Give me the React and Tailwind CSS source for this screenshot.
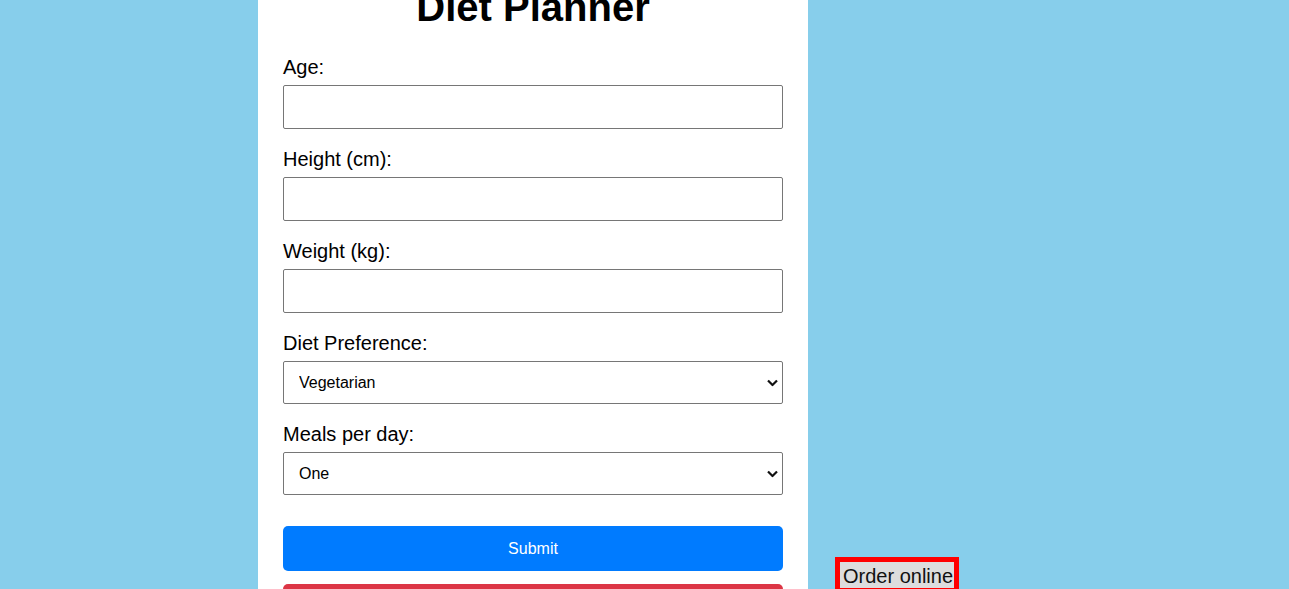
import React, { useState } from "react";

const font = { fontFamily: '"Liberation Sans", Arial, sans-serif' };

function Field({ label, children }) {
	return (
		<div>
			<label className="mb-[7px] block h-[23px] pt-[1px] text-[20px] leading-[23px] text-black">
				{label}
			</label>
			{children}
		</div>
	);
}

function Chevron() {
	return (
		<svg
			className="pointer-events-none absolute right-[5px] top-1/2 -translate-y-1/2"
			width="11"
			height="7"
			viewBox="0 0 11 7"
		>
			<path d="M1 1l4.5 4.5L10 1" fill="none" stroke="#111" strokeWidth="2.2" />
		</svg>
	);
}

function Select({ options, value, onChange }) {
	return (
		<div className="relative mb-[18px] h-[43px]">
			<select
				value={value}
				onChange={(e) => onChange(e.target.value)}
				className="h-full w-full appearance-none rounded-[2px] border border-[#767676] bg-white pl-[15px] text-[16px] text-black outline-none"
				style={font}
			>
				{options.map((o) => (
					<option key={o}>{o}</option>
				))}
			</select>
			<Chevron />
		</div>
	);
}

export default function App() {
	const [diet, setDiet] = useState("Vegetarian");
	const [meals, setMeals] = useState("One");

	return (
		<div className="flex min-h-screen items-start overflow-hidden bg-[#87ceeb]" style={font}>
			<div className="ml-[258px] w-[550px] shrink-0 bg-white px-[25px] pb-[40px]">
				<h1 className="-mt-[16px] mb-[25px] text-center text-[40px] font-bold leading-[46px] text-black">
					Diet Planner
				</h1>
				<form onSubmit={(e) => e.preventDefault()}>
					<Field label="Age:">
						<input className="mb-[18px] block h-[44px] w-full rounded-[2px] border border-[#767676] px-2 outline-none" />
					</Field>
					<Field label="Height (cm):">
						<input className="mb-[18px] block h-[44px] w-full rounded-[2px] border border-[#767676] px-2 outline-none" />
					</Field>
					<Field label="Weight (kg):">
						<input className="mb-[18px] block h-[44px] w-full rounded-[2px] border border-[#767676] px-2 outline-none" />
					</Field>
					<Field label="Diet Preference:">
						<Select
							value={diet}
							onChange={setDiet}
							options={["Vegetarian", "Non-Vegetarian", "Vegan"]}
						/>
					</Field>
					<Field label="Meals per day:">
						<Select value={meals} onChange={setMeals} options={["One", "Two", "Three"]} />
					</Field>
					<button
						type="submit"
						className="mt-[31px] block h-[45px] w-full rounded-[5px] bg-[#007bff] text-[16px] text-white"
					>
						Submit
					</button>
					<button
						type="button"
						className="mt-[13px] block h-[45px] w-full rounded-[5px] bg-[#dc3545] text-[16px] text-white"
					>
						Reset
					</button>
				</form>
			</div>
			<a
				href="#"
				className="ml-[27px] mt-[557px] block border-[5px] border-[#ff0000] bg-[#dddddd] pl-[3px] pr-[1px] pt-[3px] text-[20px] leading-[23px] text-[#111]"
			>
				Order online
			</a>
		</div>
	);
}
